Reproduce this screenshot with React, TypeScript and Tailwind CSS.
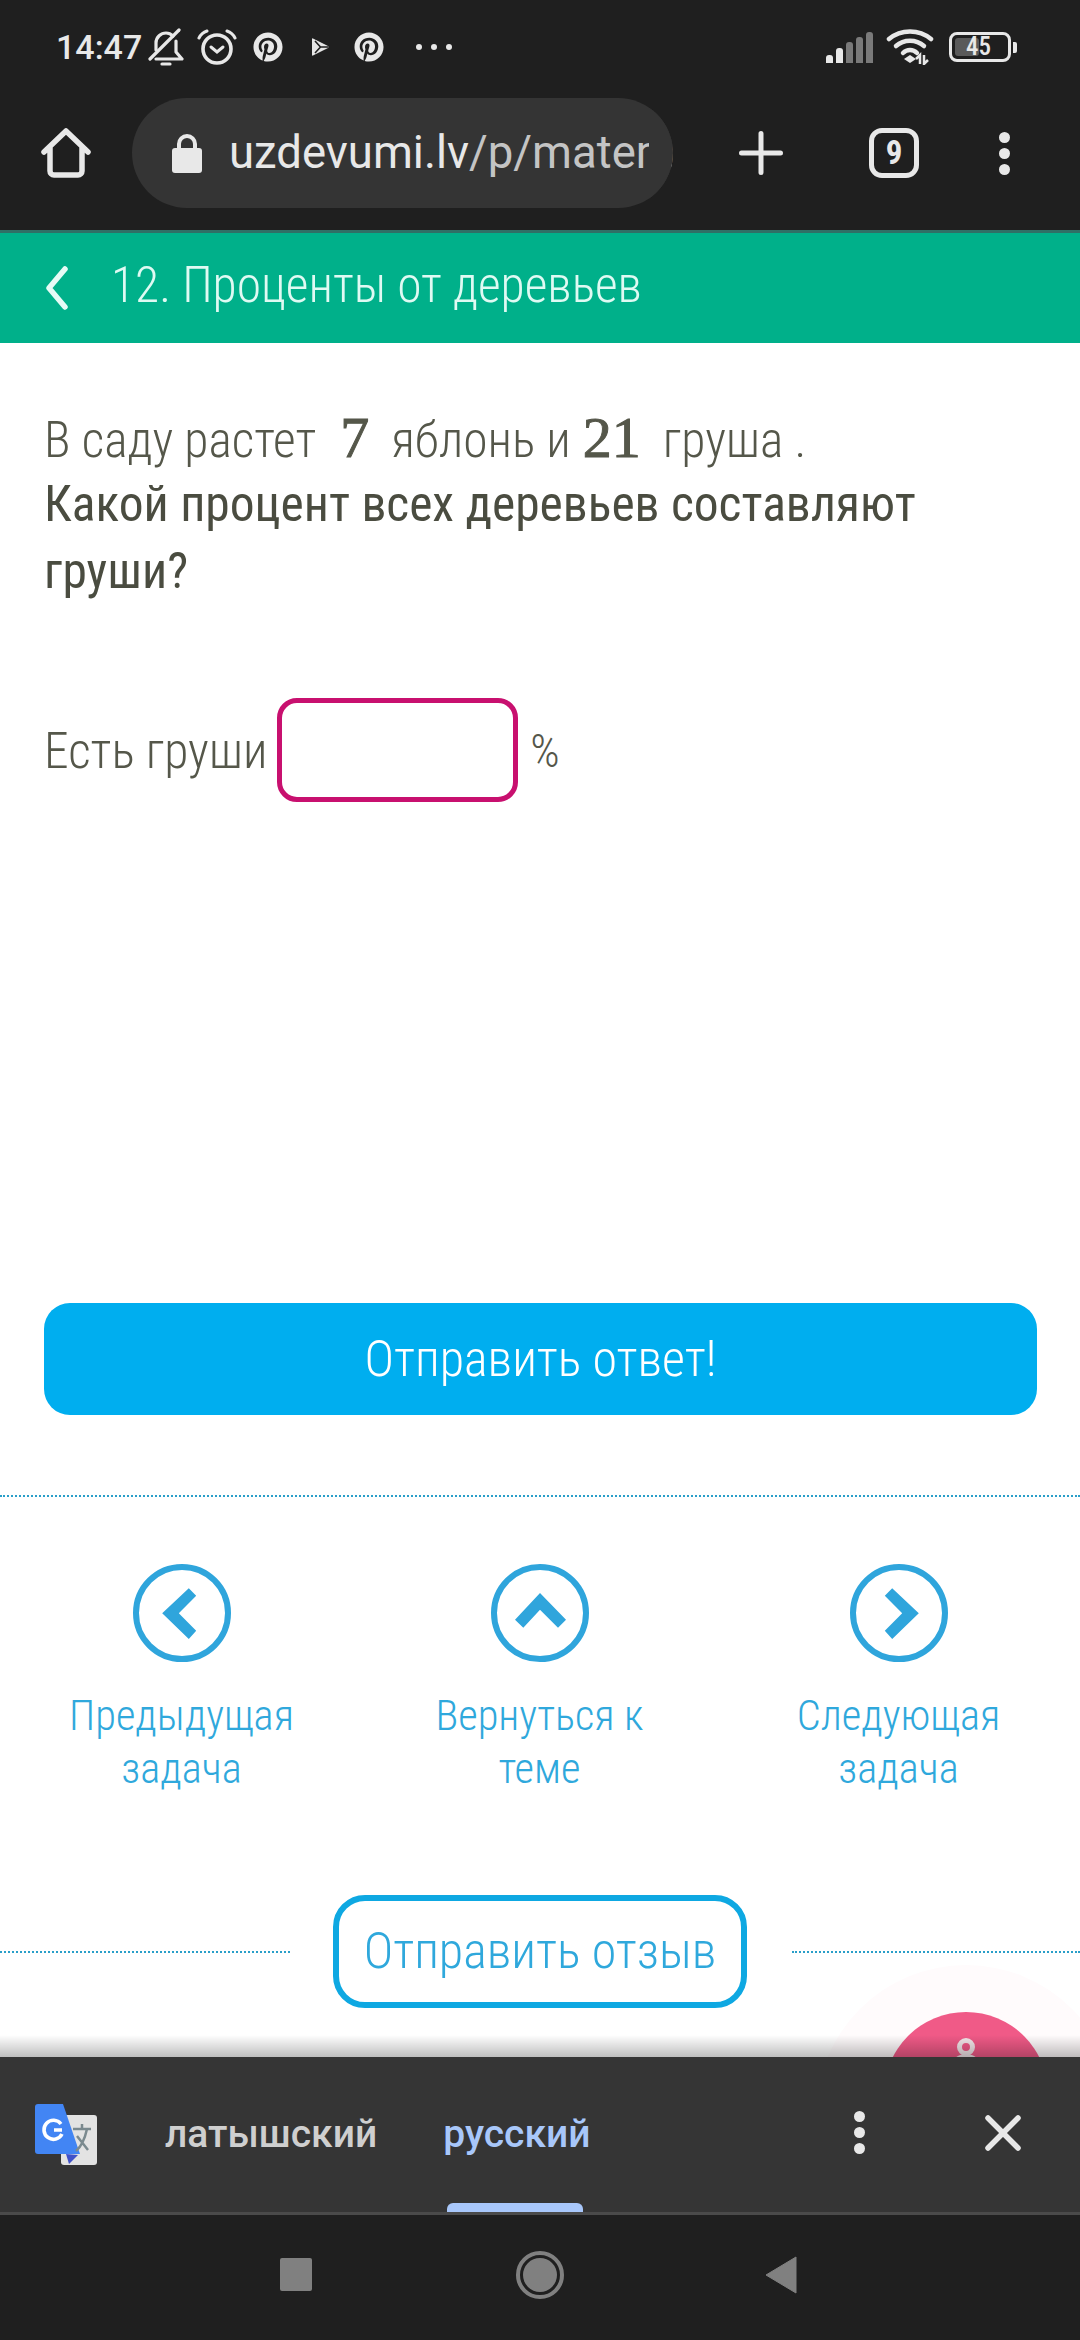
import React from "react";
import { X } from "lucide-react";
import { FaPinterest } from "react-icons/fa";

const roboto = "font-['Roboto',sans-serif]";
const cond = "font-['Roboto',sans-serif] font-light font-stretch-75%";
const mathNum = "font-['Liberation_Serif',serif] font-normal text-[58px] [-webkit-text-stroke:1px_#55574a]";

function Chevron({ dir }: { dir: "left" | "up" | "right" }) {
  const points = {
    left: "29.2,49.3 55.8,24.3 63.2,31.7 45.8,49.3 63.2,66.7 55.8,75",
    up: "49,29 24,55.7 32.3,63.7 49,45.7 67,63.7 75,55.7",
    right: "68.8,49.3 42.2,24.3 34.8,31.7 52.2,49.3 34.8,66.7 42.2,75",
  }[dir];
  return (
    <svg viewBox="0 0 98 98" className="w-[98px] h-[98px]" aria-hidden>
      <circle cx="49" cy="49" r="46" fill="none" stroke="#2fa5dc" strokeWidth="6" />
      <polygon points={points} fill="#2fa5dc" />
    </svg>
  );
}

function NavItem({ dir, a, b }: { dir: "left" | "up" | "right"; a: string; b: string }) {
  return (
    <div className="flex flex-col items-center w-[358px]">
      <Chevron dir={dir} />
      <div className={`${cond} mt-[27px] text-[42.5px] leading-[53px] text-[#2fa8dc] text-center`}>
        <div>{a}</div>
        <div>{b}</div>
      </div>
    </div>
  );
}

function BellSlash() {
  return (
    <svg viewBox="0 0 36 38" className="w-[36px] h-[38px]" aria-hidden>
      <g fill="none" stroke="#e8e8e8" strokeWidth="3.2" strokeLinecap="round" strokeLinejoin="round">
        <path d="M8 22 V15 C8 9 13 5 18 5 C21 5 23 6 25 8" />
        <path d="M28 13 V24 L34 31 H8" />
        <path d="M2 31 L31 2" />
        <path d="M14 36 H22" />
      </g>
    </svg>
  );
}

function Alarm() {
  return (
    <svg viewBox="0 0 40 36" className="w-[40px] h-[36px]" aria-hidden>
      <g fill="none" stroke="#e8e8e8" strokeLinecap="round">
        <circle cx="20" cy="20" r="14" strokeWidth="3.6" />
        <path d="M14 18 L20 23 L26 18" strokeWidth="3" />
        <path d="M2 9 C4 5 7 3 10 2" strokeWidth="3" />
        <path d="M30 2 C33 3 36 5 38 9" strokeWidth="3" />
      </g>
    </svg>
  );
}

function Play() {
  return (
    <svg viewBox="0 0 18 18" className="w-[18px] h-[18px]" aria-hidden>
      <path d="M1 1 Q1 0 2 0.5 L17 8 Q18 9 17 10 L2 17.5 Q1 18 1 17 Z" fill="#e6e6e6" />
      <path d="M4 3 L9.5 9 L4 15 M9.5 9 H17" fill="none" stroke="#1f1f1f" strokeWidth="1.6" />
    </svg>
  );
}

function Wifi() {
  return (
    <svg viewBox="0 0 48 36" className="w-[48px] h-[36px]" aria-hidden>
      <g fill="none" stroke="#e8e8e8" strokeWidth="4.5" strokeLinecap="round">
        <path d="M3 10 C15 0 33 0 45 10" />
        <path d="M10 17 C18 10 30 10 38 17" />
        <path d="M17 24 C21 20 27 20 31 24" />
      </g>
      <path d="M18 30 L24 26 L30 30 L24 34 Z" fill="#e8e8e8" />
      <path d="M34 35 V26 L30 30 M38 26 V35 L42 31" fill="none" stroke="#e8e8e8" strokeWidth="2.5" />
    </svg>
  );
}

function Signal() {
  const bars = [
    { h: 8, c: "#e8e8e8" },
    { h: 15, c: "#e8e8e8" },
    { h: 21, c: "#7a7a7a" },
    { h: 26, c: "#7a7a7a" },
    { h: 31, c: "#7a7a7a" },
  ];
  return (
    <div className="flex items-end gap-[3px] h-[31px]">
      {bars.map((b, i) => (
        <div key={i} className="w-[7px] rounded-t-[3px]" style={{ height: b.h, background: b.c }} />
      ))}
    </div>
  );
}

function Battery() {
  return (
    <div className="flex items-center">
      <div className="relative w-[62px] h-[30px] rounded-[8px] border-[3px] border-[#e8e8e8] flex items-center p-[3px]">
        <div className="w-[24px] h-full bg-[#5a5a5a] rounded-[3px]" />
        <span className={`${roboto} absolute left-[14px] top-[-3px] text-[25px] leading-[30px] font-medium text-[#e8e8e8] font-stretch-75%`}>45</span>
      </div>
      <div className="ml-[2px] w-[4px] h-[11px] bg-[#e8e8e8] rounded-r-[2px]" />
    </div>
  );
}

function TranslateLogo() {
  return (
    <svg viewBox="0 0 62 62" className="w-[62px] h-[62px]" aria-hidden>
      <rect x="26" y="11" width="36" height="50" rx="3" fill="#e3e3e3" />
      <path d="M34 60 L43 51 L31 50 Z" fill="#3f51c9" />
      <path d="M3 0 H28 L45 50 H3 A3 3 0 0 1 0 47 V3 A3 3 0 0 1 3 0 Z" fill="#4285f4" />
      <path d="M26 20 A9.5 9.5 0 1 0 27 30 M19 26 H27" fill="none" stroke="#fff" strokeWidth="3.6" />
      <path d="M38 25 H56 M47 20 V25 M41 47 C47 42 50 34 52 25 M42 32 L53 46" fill="none" stroke="#7b8a8f" strokeWidth="2.5" />
    </svg>
  );
}

function Dots3() {
  return (
    <div className="flex flex-col gap-[5px]">
      <div className="w-[11px] h-[11px] rounded-full bg-[#e8e8e8]" />
      <div className="w-[11px] h-[11px] rounded-full bg-[#e8e8e8]" />
      <div className="w-[11px] h-[11px] rounded-full bg-[#e8e8e8]" />
    </div>
  );
}

export default function App() {
  return (
    <div className="w-[1080px] h-[2340px] flex flex-col overflow-hidden bg-white">
      {/* system + browser chrome */}
      <div className="bg-[#1f1f1f] h-[230px] flex flex-col">
        <div className="h-[94px] flex items-center justify-between pl-[56px] pr-[63px] text-[#e8e8e8]">
          <div className="flex items-center">
            <span className={`${roboto} text-[34px] font-medium w-[92px]`}>14:47</span>
            <BellSlash />
            <span className="ml-[13px]"><Alarm /></span>
            <FaPinterest className="ml-[16px] w-[30px] h-[30px]" />
            <span className="ml-[28px]"><Play /></span>
            <FaPinterest className="ml-[25px] w-[30px] h-[30px]" />
            <div className="ml-[32px] flex gap-[9px]">
              <div className="w-[6px] h-[6px] rounded-full bg-[#e8e8e8]" />
              <div className="w-[6px] h-[6px] rounded-full bg-[#e8e8e8]" />
              <div className="w-[6px] h-[6px] rounded-full bg-[#e8e8e8]" />
            </div>
          </div>
          <div className="flex items-center">
            <Signal />
            <span className="ml-[13px]"><Wifi /></span>
            <span className="ml-[15px]"><Battery /></span>
          </div>
        </div>
        <div className="flex items-center h-[110px] mt-[4px] pl-[41px]">
          <svg viewBox="0 0 50 52" className="w-[50px] h-[52px]" aria-hidden>
            <path d="M3 25 L25 4 L47 25 M9 20 V44 A4 4 0 0 0 13 48 H37 A4 4 0 0 0 41 44 V20" fill="none" stroke="#e8e8e8" strokeWidth="5.5" strokeLinecap="round" strokeLinejoin="round" />
          </svg>
          <div className="relative ml-[41px] w-[541px] h-[110px] rounded-full bg-[#343434] flex items-center pl-[40px] overflow-hidden">
            <svg viewBox="0 0 30 39" className="w-[30px] h-[39px] shrink-0" aria-hidden>
              <path d="M7 16 V10 A8 8 0 0 1 23 10 V16" fill="none" stroke="#e8e8e8" strokeWidth="4" />
              <rect x="0" y="14" width="30" height="25" rx="3" fill="#e8e8e8" />
            </svg>
            <span className={`${roboto} ml-[27px] text-[45.5px] whitespace-nowrap text-[#e8e8e8]`}>
              uzdevumi.lv<span className="text-[#c4c4c4]">/p/matem</span>
            </span>
            <div className="absolute right-0 top-0 bottom-0 w-[24px] bg-[#343434]" />
          </div>
          <svg viewBox="0 0 44 44" className="ml-[66px] w-[44px] h-[44px]" aria-hidden>
            <path d="M2.5 22 H41.5 M22 2.5 V41.5" fill="none" stroke="#e8e8e8" strokeWidth="5" strokeLinecap="round" />
          </svg>
          <div className="ml-[86px] w-[50px] h-[50px] rounded-[13px] border-[5px] border-[#e8e8e8] flex items-center justify-center">
            <span className={`${roboto} text-[33px] font-bold text-[#e8e8e8] font-stretch-75%`}>9</span>
          </div>
          <div className="ml-[80px]"><Dots3 /></div>
        </div>
      </div>
      <div className="h-[3px] bg-[#2f6f66]" />

      {/* green page header */}
      <div className="h-[110px] bg-[#00b08a] flex items-center pl-[45px]">
        <svg viewBox="0 0 24 44" className="w-[24px] h-[44px]" aria-hidden>
          <path d="M20 3 L4 22 L20 41" fill="none" stroke="#e6fbf6" strokeWidth="5.5" strokeLinecap="round" strokeLinejoin="round" />
        </svg>
        <span className={`${cond} ml-[42px] pb-[5px] text-[49.5px] text-[#dffaf3] whitespace-nowrap`}>12. Проценты от деревьев</span>
      </div>

      {/* page */}
      <div className="relative flex-1 flex flex-col overflow-hidden">
        <div className="px-[44px] pt-[61px]">
          <div className={`${cond} text-[49.5px] leading-[67px] text-[#55574a] h-[67px] flex items-baseline whitespace-nowrap`}>
            <span>В саду растет</span>
            <span className={`ml-[24px] ${mathNum}`}>7</span>
            <span className="ml-[22px]">яблонь и</span>
            <span className={`ml-[12px] ${mathNum}`}>21</span>
            <span className="ml-[22px]">груша .</span>
          </div>
          <div className={`${roboto} font-normal font-stretch-75% text-[49.5px] leading-[67px] text-[#4a4c40]`}>
            Какой процент всех деревьев составляют
            <br />
            груши?
          </div>
          <div className={`${cond} mt-[93px] flex items-end text-[49.5px] text-[#55574a] whitespace-nowrap`}>
            <span className="leading-[104px] translate-y-[1px]">Есть груши</span>
            <div className="ml-[10px] w-[241px] h-[104px] rounded-[20px] border-[5px] border-[#c8106f] bg-white" />
            <span className="ml-[12px] leading-[104px] translate-y-[1px] text-[46px]">%</span>
          </div>
          <div className={`${cond} mt-[501px] w-[993px] h-[112px] rounded-[26px] bg-[#00aeef] text-white text-[50px] flex items-center justify-center`}>
            Отправить ответ!
          </div>
        </div>
        <div className="mt-[80px] border-t-2 border-dotted border-[#2a9fc9]" />
        <div className="mt-[67px] flex justify-center">
          <NavItem dir="left" a="Предыдущая" b="задача" />
          <NavItem dir="up" a="Вернуться к" b="теме" />
          <div className="ml-[1px]">
            <NavItem dir="right" a="Следующая" b="задача" />
          </div>
        </div>
        <div className="mt-[100px] flex items-center">
          <div className="w-[290px] border-t-2 border-dotted border-[#2a9fc9]" />
          <div className={`${cond} ml-[43px] w-[414px] h-[113px] rounded-[32px] border-[6px] border-[#0ea8e2] text-[#2fa8dc] text-[50px] flex items-center justify-center`}>
            Отправить отзыв
          </div>
          <div className="ml-[45px] flex-1 border-t-2 border-dotted border-[#2a9fc9]" />
        </div>

        {/* floating help button, cut off by the translate bar */}
        <div className="absolute left-[816px] top-[1622px] w-[300px] h-[300px] rounded-full bg-[#fffbfc]" />
        <div className="absolute left-[884px] top-[1669px] w-[164px] h-[164px] rounded-full bg-[#f05a87] flex flex-col items-center pt-[26px]">
          <div className="w-[18px] h-[18px] rounded-full border-[5px] border-[#f3e6e9]" />
          <div className="-mt-[2px] w-[34px] h-[24px] rounded-t-full bg-[#f3e6e9]" />
        </div>
        <div className="absolute left-0 right-0 bottom-0 h-[22px] bg-gradient-to-b from-transparent to-[#00000040]" />
      </div>

      {/* translate bar */}
      <div className="relative h-[155px] bg-[#353535] flex items-center pl-[35px]">
        <TranslateLogo />
        <span className={`${roboto} ml-[68px] text-[39px] font-medium text-[#cfcfcf] font-stretch-87.5%`}>латышский</span>
        <span className={`${roboto} ml-[66px] text-[39px] font-medium text-[#a8c7fa] font-stretch-87.5%`}>русский</span>
        <div className="absolute left-[447px] bottom-0 w-[136px] h-[9px] rounded-t-[6px] bg-[#a8c7fa]" />
        <div className="absolute left-[854px] top-[54px]"><Dots3 /></div>
        <X className="absolute left-[973px] top-[46px] w-[60px] h-[60px] text-[#e8e8e8]" strokeWidth={2.2} />
      </div>
      <div className="h-[3px] bg-[#4a4a4a]" />

      {/* nav bar */}
      <div className="flex-none h-[125px] bg-[#1f1f1f] flex items-center justify-center relative">
        <div className="absolute left-[280px] top-[43px] w-[32px] h-[33px] rounded-[2px] bg-[#808080]" />
        <div className="w-[48px] h-[48px] rounded-full border-[4px] border-[#808080] p-[3px] -mt-[5px]">
          <div className="w-full h-full rounded-full bg-[#808080]" />
        </div>
        <svg viewBox="0 0 32 38" className="absolute left-[765px] top-[41px] w-[32px] h-[38px]" aria-hidden>
          <path d="M31 1 V37 L1 19 Z" fill="#808080" stroke="#808080" strokeLinejoin="round" />
        </svg>
      </div>
    </div>
  );
}
